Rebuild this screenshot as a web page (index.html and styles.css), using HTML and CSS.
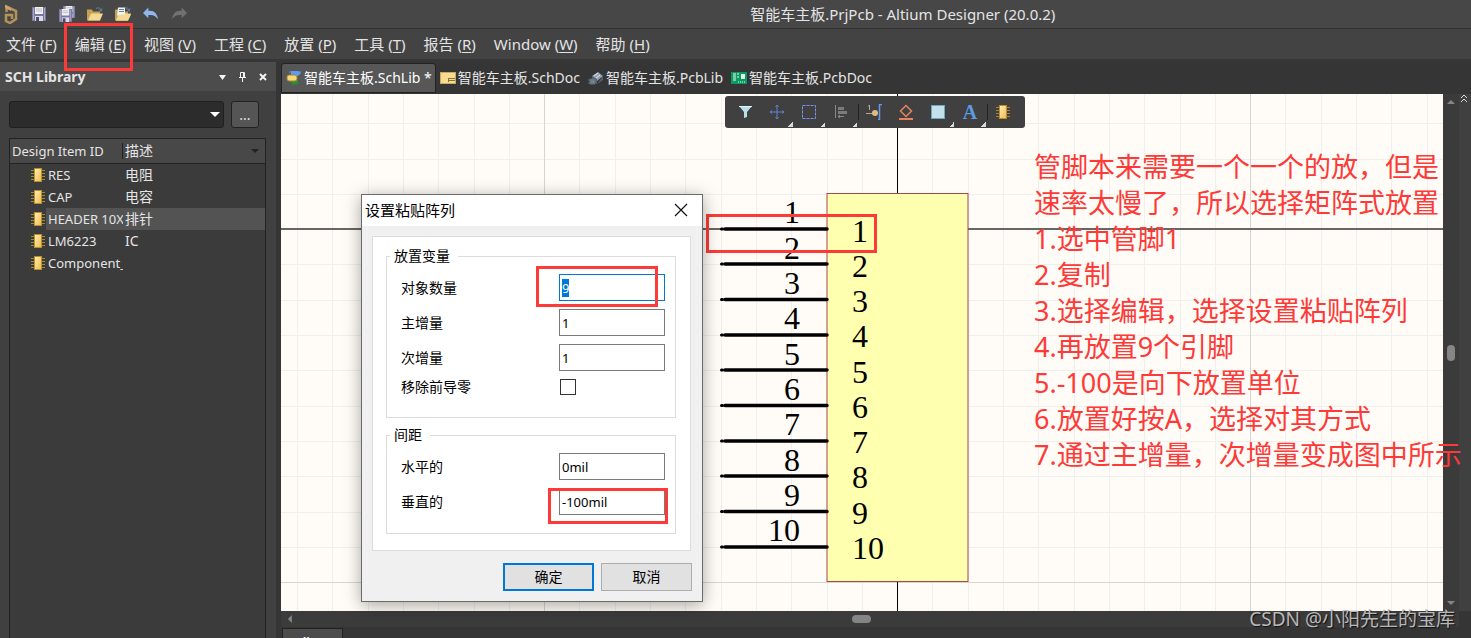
FILE: index.html
```html
<!DOCTYPE html>
<html lang="zh-CN">
<head>
<meta charset="utf-8">
<title>智能车主板.PrjPcb - Altium Designer (20.0.2)</title>
<link rel="stylesheet" href="styles.css">
</head>
<body>
<svg class="defs" width="0" height="0" aria-hidden="true">
  <defs>
    <linearGradient id="gold" x1="0" y1="0" x2="1" y2="1"><stop offset="0" stop-color="#fff0b8"/><stop offset="1" stop-color="#eebb4c"/></linearGradient>
    <symbol id="chip" viewBox="0 0 14 14">
      <path d="M0 2.5h14M0 5.5h14M0 8.5h14M0 11.5h14" stroke="#a8872c"/>
      <rect x="3.5" y=".5" width="7" height="13" fill="url(#gold)" stroke="#b98f30"/>
    </symbol>
    <symbol id="disk" viewBox="0 0 14 14">
      <path d="M0 0h14v14H0z" fill="#77779f"/><path d="M1 1h1v12H1zM12 1h1v12h-1z" fill="#a7a7cd"/>
      <path d="M3 0h8v7H3z" fill="#f2f2f4"/><path d="M4 2h6M4 4h6" stroke="#bbb"/>
      <path d="M3 9h8v5H3z" fill="#dcdcea"/><path d="M4 10h3v4H4z" fill="#4a4a70"/>
    </symbol>
    <symbol id="folder" viewBox="0 0 16 15">
      <path d="M0 3h5l1 2h7v9H0z" fill="#c79f50"/><path d="M1 14l3-7h12l-3 7z" fill="#f4d995"/>
      <path d="M9 2q4-2 5 2m-2-1l2 2 1-3" fill="none" stroke="#5d86a8"/>
    </symbol>
  </defs>
</svg>

<header class="titlebar">
  <div class="quick">
    <svg class="logo" viewBox="0 0 14 20"><path d="M2.500 8V2.500L12 7v8l-6 4-4-2v-6h6v4" fill="none" stroke="#b4935a" stroke-width="2.500"/><path d="M1 1l6 3v3L1 4z" fill="#c7a76e"/></svg>
    <button aria-label="保存"><svg viewBox="0 0 16 16"><use href="#disk" x="1" y="1" width="14" height="14"/></svg></button>
    <button aria-label="全部保存"><svg viewBox="0 0 16 16"><use href="#disk" x="4" y="0" width="12" height="12"/><use href="#disk" x="0" y="3" width="13" height="13"/></svg></button>
    <button aria-label="打开"><svg viewBox="0 0 16 15"><use href="#folder"/></svg></button>
    <button aria-label="打开工程"><svg viewBox="0 0 16 15"><use href="#folder"/><path d="M3 1h7v8H2z" fill="#eef3f6"/><path d="M4 3h5M4 5h5" stroke="#6a8496"/><path d="M1 14l3-6h12l-3 6z" fill="#f4d995"/></svg></button>
    <button aria-label="撤销"><svg viewBox="0 0 15 14"><path d="M5 1v3q8-1 9 8-3-5-9-4v3L0 6z" fill="#8fb6ee"/></svg></button>
    <button aria-label="重做" disabled><svg viewBox="0 0 15 14"><path d="M10 1v3q-8-1-9 8 3-5 9-4v3l5-5z" fill="#717171"/></svg></button>
  </div>
  <h1>智能车主板.PrjPcb - Altium Designer (20.0.2)</h1>
</header>

<nav class="menu">
  <button>文件 (<u>F</u>)</button>
  <button class="marked">编辑 (<u>E</u>)</button>
  <button>视图 (<u>V</u>)</button>
  <button>工程 (<u>C</u>)</button>
  <button>放置 (<u>P</u>)</button>
  <button>工具 (<u>T</u>)</button>
  <button>报告 (<u>R</u>)</button>
  <button>Window (<u>W</u>)</button>
  <button>帮助 (<u>H</u>)</button>
</nav>

<div class="main">
  <aside class="panel">
    <div class="panel-head">
      <h2>SCH Library</h2>
      <button aria-label="菜单"><svg viewBox="0 0 10 10"><path d="M1 3h7L4.500 8z" fill="#f4f4f4"/></svg></button>
      <button aria-label="固定"><svg viewBox="0 0 10 10"><path d="M2.500 5V.5h4V5M1 5.500h7M4.500 6v4M5.500 1v4" fill="none" stroke="#f4f4f4"/></svg></button>
      <button aria-label="关闭"><svg viewBox="0 0 10 10"><path d="M2 2l6 6M8 2L2 8" stroke="#f4f4f4" stroke-width="2"/></svg></button>
    </div>
    <div class="search">
      <select aria-label="库"><option></option></select>
      <button>...</button>
    </div>
    <div class="list">
      <table>
        <thead><tr><th class="c1">Design Item ID</th><th><span class="th">描述</span></th></tr></thead>
        <tbody>
          <tr><td><div class="item"><svg><use href="#chip"/></svg><span>RES</span></div></td><td>电阻</td></tr>
          <tr><td><div class="item"><svg><use href="#chip"/></svg><span>CAP</span></div></td><td>电容</td></tr>
          <tr class="sel"><td><div class="item"><svg><use href="#chip"/></svg><span>HEADER 10X</span></div></td><td>排针</td></tr>
          <tr><td><div class="item"><svg><use href="#chip"/></svg><span>LM6223</span></div></td><td>IC</td></tr>
          <tr><td><div class="item"><svg><use href="#chip"/></svg><span>Component_</span></div></td><td></td></tr>
        </tbody>
      </table>
    </div>
  </aside>

  <section class="work">
    <div class="tabs">
      <button class="active"><svg viewBox="0 0 16 16"><path d="M5 1h7l3 2-3 3H5z" fill="#5b9df0"/><path d="M3 2h12" stroke="#5b9df0"/><path d="M5 10h7v4H6z" fill="#2e8b3a"/><path d="M4 12h9M7 10v6M10 10v6" stroke="#2e8b3a"/><rect x="1" y="5" width="10" height="6" rx="2" fill="#f7d77c" stroke="#a9812d"/></svg>智能车主板.SchLib *</button>
      <button><svg viewBox="0 0 16 16"><rect x=".5" y="2.500" width="15" height="11" fill="#f7dc92" stroke="#c9a95c"/><path d="M9 8.500h6M9 10.500h6M8.500 8v4" stroke="#86703c"/></svg>智能车主板.SchDoc</button>
      <button><svg viewBox="0 0 16 16"><path d="M4 6l6-4 5 4-6 5z" fill="#93a2b2"/><path d="M4 6v4l5 4V9zM15 6v4l-6 4" fill="#56616e"/><path d="M6 6l4-3M8 8l4-3" stroke="#dde4ea"/><path d="M2 9h5v5H2zM0 10h8M0 13h8" fill="#788899" stroke="#66717d"/></svg>智能车主板.PcbLib</button>
      <button><svg viewBox="0 0 16 16"><path d="M0 2h16v12H0z" fill="#0c9a62"/><path d="M2 4h3M2 6h3M2 8h3M2 10h3M6 4h2M6 7h2M7 12h1M9 12h1M11 12h1M13 12h1" stroke="#e6fff2"/><path d="M10 4h4v5h-4z" fill="#dff5e8"/></svg>智能车主板.PcbDoc</button>
    </div>

    <div class="editor">
      <div class="canvas">
        <svg class="sheet" role="img" aria-label="原理图符号">
          <defs>
            <pattern id="grid" x="616" y="135" width="353" height="353" patternUnits="userSpaceOnUse">
              <path d="M35.500 0v353M71.500 0v353M106.500 0v353M141.500 0v353M177.500 0v353M212.500 0v353M247.500 0v353M283.500 0v353M318.500 0v353M0 35.500h353M0 71.500h353M0 106.500h353M0 141.500h353M0 177.500h353M0 212.500h353M0 247.500h353M0 283.500h353M0 318.500h353" stroke="#eff0ee"/>
              <path d="M.5 0v353M0 .5h353" stroke="#d5d6d2"/>
            </pattern>
          </defs>
          <rect width="100%" height="100%" fill="#fffcf7"/>
          <rect width="100%" height="100%" fill="url(#grid)"/>
          <path d="M0 135h3000" stroke="#666" stroke-width="2"/>
          <path d="M616.500 0v900" stroke="#000"/>
          <rect x="546" y="99.500" width="141" height="388" fill="#ffffb0" stroke="#a5494a"/>
          <g stroke="#000" stroke-linecap="round">
            <path stroke-width="3.500" d="M444 135h102M444 170h102M444 205.500h102M444 241h102M444 276h102M444 311.500h102M444 347h102M444 382h102M444 417.500h102M444 453h102"/>
            <path stroke-width="3" d="M440.500 135h1M440.500 170h1M440.500 205.500h1M440.500 241h1M440.500 276h1M440.500 311.500h1M440.500 347h1M440.500 382h1M440.500 417.500h1M440.500 453h1"/>
          </g>
          <g class="num end">
            <text x="519" y="129">1</text><text x="519" y="165">2</text><text x="519" y="200">3</text><text x="519" y="235">4</text><text x="519" y="271">5</text><text x="519" y="306">6</text><text x="519" y="341">7</text><text x="519" y="377">8</text><text x="519" y="412">9</text><text x="519" y="447">10</text>
          </g>
          <g class="num">
            <text x="571" y="148">1</text><text x="571" y="183">2</text><text x="571" y="218">3</text><text x="571" y="253">4</text><text x="571" y="289">5</text><text x="571" y="324">6</text><text x="571" y="359">7</text><text x="571" y="394">8</text><text x="571" y="430">9</text><text x="571" y="465">10</text>
          </g>
          <rect x="426.500" y="121.500" width="168" height="36" fill="none" stroke="#fd3a37" stroke-width="3"/>
        </svg>

        <div class="tools">
          <button aria-label="过滤"><svg viewBox="0 0 16 16"><path d="M2 2h13l-5 6v5l-3 1V8z" fill="#b9dfea"/><path d="M2 2.500h13" stroke="#e6f5fa"/></svg></button>
          <button class="more" aria-label="移动"><svg viewBox="0 0 16 16"><path d="M8 1v14M1 8h14M6.500 3L8 1l1.500 2M6.500 13L8 15l1.500-2M3 6.500L1 8l2 1.500M13 6.500L15 8l-2 1.500" fill="none" stroke="#5e82cf"/></svg></button>
          <button class="more" aria-label="选择"><svg viewBox="0 0 16 16"><rect x="1.500" y="1.500" width="13" height="13" fill="none" stroke="#7795ea" stroke-dasharray="3 1"/></svg></button>
          <button class="more line" aria-label="对齐"><svg viewBox="0 0 16 16"><path d="M2.500 1v13" stroke="#898989"/><path d="M5 3h6v3H5zM5 7h9v3H5z" fill="#7c7c7c"/><path d="M5 12.500h6M7 11l-2 1.500L7 14" fill="none" stroke="#898989"/></svg></button>
          <button aria-label="放置管脚"><svg viewBox="0 0 16 16"><path d="M3.500 1v5M2 2.500L3.500 1M0 9.500h7" fill="none" stroke="#b5aa94"/><circle cx="9" cy="9" r="3" fill="#e2bd7d"/><path d="M16 .5h-2.500v15H12" fill="none" stroke="#6599ee" stroke-width="1.500"/></svg></button>
          <button aria-label="IEEE 符号"><svg viewBox="0 0 16 16"><path d="M8 1.500l5.500 5.500L8 12.500 2.500 7z" fill="none" stroke="#e18461" stroke-width="1.500"/><path d="M1 15h14" stroke="#ef7f57" stroke-width="2"/></svg></button>
          <button class="more" aria-label="矩形"><svg viewBox="0 0 16 16"><rect x="1.500" y="1.500" width="13" height="13" fill="#c3e3ec" stroke="#6fa7c6"/></svg></button>
          <button class="more line letter" aria-label="文本">A</button>
          <button aria-label="部件"><svg viewBox="0 0 16 16"><use href="#chip" x="1" y="1" width="14" height="14"/></svg></button>
        </div>

        <form class="dialog" role="dialog" aria-labelledby="dlg">
          <div class="dlg-head"><h2 id="dlg">设置粘贴阵列</h2><button type="button" aria-label="关闭"><svg viewBox="0 0 14 14"><path d="M1 1l12 12M13 1L1 13" stroke="#111" stroke-width="1.200"/></svg></button></div>
          <div class="dlg-body">
            <fieldset>
              <legend>放置变量</legend>
              <div class="row mark-a"><label for="n">对象数量</label><input id="n" value="9" autofocus></div>
              <div class="row"><label for="p">主增量</label><input id="p" value="1"></div>
              <div class="row"><label for="s">次增量</label><input id="s" value="1"></div>
              <div class="row check"><label for="z">移除前导零</label><input id="z" type="checkbox"></div>
            </fieldset>
            <fieldset>
              <legend>间距</legend>
              <div class="row"><label for="h">水平的</label><input id="h" value="0mil"></div>
              <div class="row mark-b"><label for="v">垂直的</label><input id="v" value="-100mil"></div>
            </fieldset>
          </div>
          <div class="dlg-foot"><button type="button" class="ok">确定</button><button type="button">取消</button></div>
        </form>

        <div class="note">
          <p>管脚本来需要一个一个的放，但是</p>
          <p>速率太慢了，所以选择矩阵式放置</p>
          <p>1.选中管脚1</p>
          <p>2.复制</p>
          <p>3.选择编辑，选择设置粘贴阵列</p>
          <p>4.再放置9个引脚</p>
          <p>5.-100是向下放置单位</p>
          <p>6.放置好按A，选择对其方式</p>
          <p>7.通过主增量，次增量变成图中所示</p>
        </div>
      </div>
      <div class="vbar"><svg viewBox="0 0 10 6"><path d="M0 6l5-5 5 5z"/></svg><span></span><svg viewBox="0 0 10 6"><path d="M0 0l5 5 5-5z"/></svg></div>
      <div class="side"><svg viewBox="0 0 8 8"><path d="M1 4l3-3 3 3M1 8l3-3 3 3" fill="none" stroke="#ddd"/></svg></div>
    </div>
    <div class="hbar"><svg viewBox="0 0 6 10"><path d="M6 0L1 5l5 5z"/></svg><span></span><svg viewBox="0 0 6 10"><path d="M0 0l5 5-5 5z"/></svg></div>
    <div class="bottom"><button>Editor</button></div>
    <div class="credit">CSDN @小阳先生的宝库</div>
  </section>
</div>
<script src="main.js"></script>
</body>
</html>
```

FILE: styles.css
```css
*, ::before, ::after { box-sizing: border-box; }
body {
  margin: 0; height: 100vh; overflow: hidden;
  display: flex; flex-direction: column;
  background: #404040; color: #e4e4e4;
  font: 14px/20px "Noto Sans", "Noto Sans CJK SC", sans-serif;
}
button, input, select { font: inherit; color: inherit; }
button { background: none; border: 0; padding: 0; }
h1, h2, p { margin: 0; font-weight: 400; }
.defs { position: absolute; }

.titlebar { flex: none; height: 29px; display: flex; align-items: center; background: #474747; border-bottom: 1px solid #333; }
.quick { flex: none; width: 51%; display: flex; align-items: center; gap: 12px; padding-left: 3px; }
.quick svg { display: block; width: 16px; height: 16px; }
.quick .logo { height: 20px; }
.titlebar h1 { font-size: 15px; white-space: nowrap; }

.menu { flex: none; height: 33px; display: flex; align-items: center; gap: 18px; padding: 0 6px; background: #434343; border-bottom: 3px solid #363636; font-size: 15px; }
.menu button { position: relative; white-space: nowrap; }
.menu u { text-underline-offset: 2px; }
.marked::after { content: ""; position: absolute; left: -11px; right: -7px; top: -11px; height: 48px; border: 3px solid #fd3a37; z-index: 5; }

.main { flex: 1; min-height: 0; display: flex; background: #353535; }
.panel { flex: none; width: 276px; margin-right: 5px; display: flex; flex-direction: column; background: #404040; }
.panel-head { flex: none; height: 29px; display: flex; align-items: center; gap: 10px; padding: 0 8px 0 5px; background: #4c4c4c; }
.panel-head h2 { flex: 1; font-size: 14px; font-weight: 700; }
.panel-head svg { display: block; width: 10px; height: 10px; }
.search { position: relative; flex: none; display: flex; gap: 7px; padding: 10px 17px 10px 9px; }
.search select { flex: 1; height: 27px; border: 1px solid #202020; border-radius: 3px; appearance: none; background: #2c2c2c; }
.search::after { content: ""; position: absolute; right: 56px; top: 21px; border: 5px solid transparent; border-top-color: #fff; border-bottom: 0; }
.search button { width: 28px; height: 27px; border: 1px solid #222; border-radius: 3px; background: #555; }
.list { flex: 1; margin: 0 10px 0 9px; border: 1px solid #222; border-bottom: 0; background: #3b3b3b; }
table { width: 100%; table-layout: fixed; border-collapse: collapse; }
th { height: 24px; padding: 0 0 0 2px; text-align: left; font-weight: 400; white-space: nowrap; background: #484848; border-bottom: 1px solid #222; }
.c1 { width: 113px; font-size: 13px; }
.th { display: flex; justify-content: space-between; align-items: center; border-left: 1px solid #222; margin-left: -3px; padding: 0 6px 0 2px; line-height: 16px; }
.th::after { content: ""; border: 4px solid transparent; border-top-color: #222; border-bottom: 0; }
td { height: 22px; padding: 0 0 0 2px; line-height: 22px; }
.item { display: flex; align-items: center; padding-left: 19px; overflow: hidden; white-space: nowrap; font-size: 13px; }
.item svg { flex: none; width: 14px; height: 14px; margin-right: 1px; }
.item span { flex: 1; padding-left: 2px; overflow: hidden; }
.sel td:last-child, .sel .item span { background: #535353; }

.work { position: relative; flex: 1; min-width: 0; display: flex; flex-direction: column; }
.tabs { flex: none; height: 32px; display: flex; align-items: center; }
.tabs button { display: flex; align-items: center; gap: 2px; height: 30px; padding: 0 3px; white-space: nowrap; border: 1px solid transparent; }
.tabs .active { padding: 0 3px 0 4px; border-color: #222; border-radius: 3px 3px 0 0; background: #575757; color: #fff; }
.tabs svg { flex: none; width: 16px; height: 16px; }
.editor { flex: 1; min-height: 0; display: flex; }
.canvas { position: relative; flex: 1; min-width: 0; }
.sheet { display: block; position: absolute; width: 100%; height: 100%; }
.num { font: 32px "Liberation Serif", serif; }
.end { text-anchor: end; }

.tools { position: absolute; left: 444px; top: 2px; display: flex; padding: 0 6px 0 4px; height: 32px; border-radius: 3px; background: #404040; }
.tools button { position: relative; width: 32px; height: 32px; display: grid; place-items: center; }
.tools svg { width: 16px; height: 16px; }
.more::after { content: ""; position: absolute; right: 0; bottom: 1px; width: 5px; height: 5px; background: linear-gradient(135deg, transparent 50%, #d8d8d8 50%); }
.tools .line { margin-right: 1px; }
.line::before { content: ""; position: absolute; right: -2px; top: 8px; height: 16px; border-left: 1px solid #222; }
.tools .letter { font: 700 20px "Liberation Serif", serif; color: #5d9be5; }

.dialog { position: absolute; left: 80px; top: 100px; width: 342px; border: 1px solid #6b6b6b; background: #f0f0f0; color: #000; box-shadow: 0 3px 16px rgba(0, 0, 0, .35); }
.dlg-head { height: 31px; display: flex; align-items: center; justify-content: space-between; padding: 0 14px 2px 3px; background: #fff; }
.dlg-head h2 { font-size: 15px; }
.dlg-head svg { display: block; width: 14px; height: 14px; }
.dlg-body { margin: 10px 11px 10px 10px; padding: 10px 14px 16px 13px; border: 1px solid #dcdcdc; background: #fff; display: grid; gap: 8px; }
fieldset { min-width: 0; margin: 0; padding: 9px 10px 18px 14px; border: 1px solid #dcdcdc; }
fieldset:first-child { padding-bottom: 22px; }
legend { margin-left: -11px; padding: 0 8px 0 4px; line-height: 18px; }
.row { position: relative; display: flex; align-items: center; justify-content: space-between; margin-bottom: 8px; }
.row:last-child { margin-bottom: 0; }
.row input { width: 106px; height: 27px; padding: 0 2px; border: 1px solid #7a7a7a; border-radius: 0; background: #fff; outline: 0; font-size: 13px; }
.row input:focus { border-color: #0078d7; }
.row input::selection { background: #0078d7; color: #fff; }
.check { height: 16px; }
.row input[type="checkbox"] { appearance: none; width: 16px; height: 16px; margin: 0 89px 0 0; border-color: #333; }
.mark-a::after, .mark-b::after { content: ""; position: absolute; border: 3px solid #fd3a37; }
.mark-a::after { right: 7px; top: -8px; width: 122px; height: 41px; }
.mark-b::after { right: -3px; top: 0; width: 120px; height: 36px; }
.dlg-foot { display: flex; justify-content: flex-end; gap: 7px; padding: 2px 10px 10px; }
.dlg-foot button { width: 91px; height: 28px; border: 1px solid #adadad; background: #e1e1e1; }
.dlg-foot .ok { border: 2px solid #0078d7; }

.note { position: absolute; left: 753px; top: 55px; color: #fd3a37; font-size: 27px; line-height: 36px; white-space: nowrap; z-index: 2; }

.vbar { flex: none; width: 16px; display: flex; flex-direction: column; align-items: center; justify-content: space-between; padding: 5px 0; background: #3b3b3b; }
.vbar svg { width: 8px; height: 5px; fill: #858585; }
.vbar span { width: 8px; height: 16px; border-radius: 4px; background: #858585; }
.side { flex: none; width: 12px; padding-left: 1px; background: #404040; }
.side svg { display: block; width: 8px; height: 8px; }
.hbar { flex: none; height: 16px; margin-right: 12px; padding: 0 24px 0 6px; display: flex; align-items: center; justify-content: space-between; background: #3b3b3b; }
.hbar svg { width: 5px; height: 8px; fill: #858585; }
.hbar span { width: 19px; height: 8px; border-radius: 4px; background: #858585; }
.bottom { flex: none; height: 11px; overflow: hidden; padding: 1px; }
.bottom button { width: 61px; height: 28px; padding: 2px 0 0 9px; text-align: left; border: 1px solid #222; background: #4c4c4c; color: #fff; font-weight: 700; font-size: 12px; }
.credit { position: absolute; right: 16px; bottom: 6px; font-size: 19px; line-height: 26px; color: #b8b8b8; text-shadow: 1px 1px 1px #111; white-space: nowrap; z-index: 3; }
```

FILE: main.js
```js
const count = document.getElementById("n");
count.focus();
count.select();
```
